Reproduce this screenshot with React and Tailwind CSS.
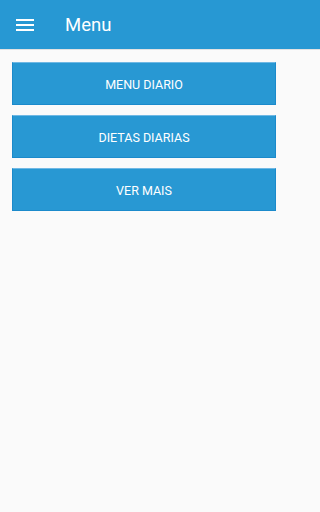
import React from 'react';

const items = ['MENU DIARIO', 'DIETAS DIARIAS', 'VER MAIS'];

const App = () => {
  return (
    <div className="w-full min-h-[512px] bg-[#fafafa]" style={{ fontFamily: 'Roboto, "Noto Sans", sans-serif' }}>
      <div className="h-[50px] bg-[#2798d3] flex items-center border-b border-[#e2e2e2]">
        <div className="w-[18px] ml-4 flex flex-col gap-[3px]">
          <span className="block h-[2px] bg-white"></span>
          <span className="block h-[2px] bg-white"></span>
          <span className="block h-[2px] bg-white"></span>
        </div>
        <span className="ml-[31px] mt-[3px] text-[18.5px] text-white">Menu</span>
      </div>

      <div className="w-[288px] px-3 pt-[12px] flex flex-col gap-[10px]">
        {items.map((label) => (
          <button
            key={label}
            type="button"
            className="h-[43px] w-full pt-[3px] bg-[#2898d3] border border-[#1b8acb] border-t-[#6fb8e4] text-white text-[12.5px]"
          >
            {label}
          </button>
        ))}
      </div>
    </div>
  );
};

export default App;
